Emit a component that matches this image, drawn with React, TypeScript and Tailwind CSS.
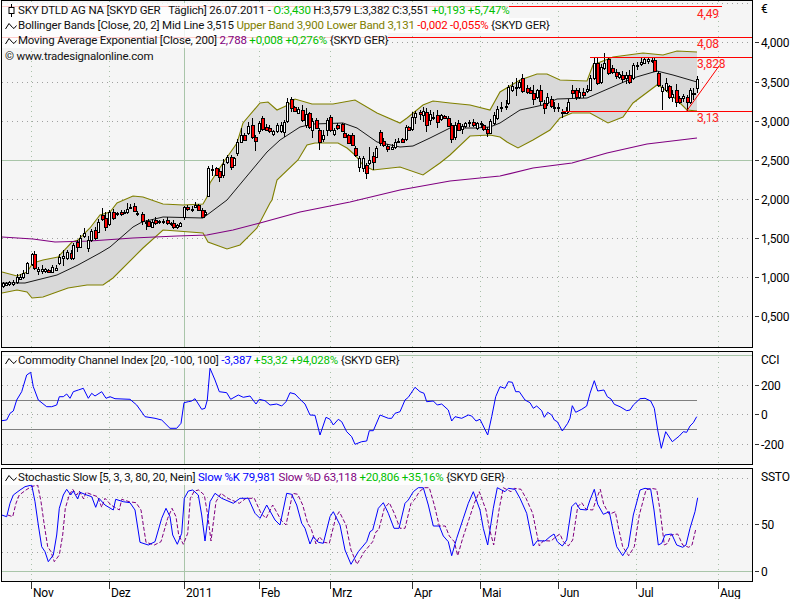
import React from 'react'

type Pt = [number, number]
// x, body top, body bottom, red?, high?, low?
type Candle = [number, number, number, number, number?, number?]

const MONTHS: [string, number][] = [
  ['Nov', 31], ['Dez', 109], ['2011', 184], ['Feb', 259], ['Mrz', 330],
  ['Apr', 412], ['Mai', 480], ['Jun', 558], ['Jul', 636], ['Aug', 718],
]

const UPPER: Pt[] = [[2,272],[17,276],[27,272],[33,263],[43,260],[58,257],[72,242],[78,240],[90,228],[100,215],[110,212],[117,203],[133,196],[143,197],[163,204],[183,205],[203,204],[207,197],[210,183],[223,163],[237,143],[243,123],[260,103],[268,102],[277,110],[288,105],[295,99],[312,104],[333,104],[355,100],[377,113],[400,123],[407,118],[423,105],[433,101],[450,103],[470,105],[490,110],[500,92],[510,86],[520,80],[537,74],[547,74],[560,80],[587,81],[593,65],[613,57],[643,53],[663,55],[677,51],[697,52]]
const LOWER: Pt[] = [[2,293],[17,290],[27,292],[32,298],[43,297],[68,288],[87,285],[103,285],[113,278],[143,248],[163,230],[177,231],[203,233],[208,242],[227,249],[240,245],[257,228],[270,203],[272,200],[277,180],[298,160],[307,145],[315,143],[338,143],[347,148],[355,155],[363,165],[373,170],[400,167],[423,175],[440,163],[450,155],[470,136],[490,135],[500,137],[507,142],[518,148],[533,140],[550,130],[560,118],[572,113],[590,113],[608,123],[623,117],[633,103],[657,85],[663,88],[677,100],[687,110],[697,111]]
const MID: Pt[] = [[2,283],[25,283],[57,275],[78,265],[100,253],[110,247],[133,227],[142,222],[163,217],[203,218],[227,200],[267,152],[280,140],[300,127],[313,124],[343,123],[357,128],[377,142],[400,147],[413,146],[430,138],[450,128],[475,128],[490,127],[500,123],[520,110],[543,105],[557,99],[587,98],[610,88],[633,78],[657,71],[673,75],[697,82]]
const EMA: Pt[] = [[2,237],[33,239],[55,242],[90,241],[133,238],[177,236],[207,235],[233,230],[260,223],[300,212],[350,202],[400,190],[450,181],[500,176],[533,168],[572,163],[607,153],[647,144],[697,138]]

const CANDLES: Candle[] = [
  [3,283,286,0],[6,283,285,0],[9,282,284,0],[13,282,284,0],[17,277,282,0],[20,277,279,0],[23,273,277,0],[27,263,273,0,262,274],
  [32,254,264,0,253,266],[34,254,268,1,251,270],[38,269,271,0,267,275],[42,269,271,0,265,274],[45,269,271,0],[48,270,272,1],[52,267,272,0],[56,268,270,0],
  [59,257,263,0,254,265],[63,256,258,0,250,266],[67,252,258,0],[71,253,258,1],[73,245,258,0],[77,242,247,1,240,252],[80,238,247,0],[84,233,236,0,228,238],
  [88,240,248,0,236,252],[91,231,240,0],[95,230,238,1],[98,222,232,0],[102,215,219,1,208,221],[105,218,227,1,212,231],[109,212,224,0],[113,212,218,1],
  [117,213,214,0],[121,212,214,1],[124,212,213,0],[127,209,212,0,203,214],[130,207,208,0,204,209],[134,206,211,1],[137,213,214,0,211,216],[142,214,221,1,212,225],
  [146,222,223,0,220,230],[148,221,226,1],[152,222,227,0],[155,220,223,1],[159,221,222,0],[163,221,222,0],[167,220,223,1],[171,223,224,0],[173,223,227,1],[177,225,227,0],
  [180,223,226,0],[184,207,217,0,206,220],[187,207,209,1],[192,209,210,0,206,212],[195,205,207,0,202,208],[198,205,210,1],[202,210,217,1],[205,212,214,0],
  [208,168,196,0],[212,169,170,0,165,176],[216,168,175,1],[219,171,177,1,169,182],[223,164,175,0,159,178],[227,157,162,0,155,164],[231,157,167,1,155,170],[234,158,165,0],
  [237,142,153,0,139,156],[241,135,142,0,128,143],[244,135,140,1],[248,126,133,0,122,135],[252,125,137,1,118,139],[255,137,141,1,135,151],[259,123,131,0,121,134],[262,118,129,1,116,131],
  [266,127,130,1],[269,128,131,1],[273,131,134,0],[277,125,131,0],[281,125,131,0],[284,122,132,0,120,137],[287,102,121,0,98,123],[291,99,108,1,97,112],
  [294,107,111,1],[298,109,113,0],[302,110,120,1,105,122],[306,114,125,0,108,128],[309,113,127,1],[312,121,130,0,118,138],[316,120,128,1],[319,130,142,1,128,150],
  [323,135,139,0,130,142],[327,120,130,0,118,136],[330,117,130,1,115,132],[334,130,134,0,128,136],[337,125,128,1],[342,124,131,1],[344,133,137,1],[348,135,143,1],
  [352,135,145,1],[355,148,155,1,146,157],[359,158,167,0,156,172],[363,158,168,0,156,172],[366,165,173,1,163,179],[369,160,163,0,147,165],[373,156,162,1,152,170],[376,148,157,0],
  [380,132,143,1,130,146],[383,141,145,1],[387,146,149,1,144,152],[392,147,149,0],[395,142,147,0],[398,141,142,0],[402,139,142,1],[406,127,139,0,125,141],
  [408,127,130,1],[412,117,129,0,112,131],[415,113,117,0,111,124],[420,112,114,1,110,120],[423,111,115,0,107,122],[426,112,125,1,108,132],[430,114,120,0,110,125],[433,117,118,0,112,120],
  [437,115,122,1,110,128],[441,115,119,0],[444,116,118,1],[448,118,126,1],[451,125,139,1,123,143],[455,125,137,0,122,140],[458,123,130,1],[462,126,129,0,124,134],
  [465,123,126,0],[469,122,123,0,120,127],[473,122,125,1],[477,123,128,0],[481,123,124,0,121,128],[483,125,129,1],[487,129,133,1,127,137],[490,121,133,0],
  [494,115,123,0,112,125],[497,109,118,0,106,120],[501,107,108,0,102,112],[506,106,107,0,100,110],[508,87,103,0,85,105],[512,86,90,0,82,92],[516,87,88,0,78,96],[519,82,87,0,80,89],
  [522,78,91,1,74,93],[527,88,92,1],[530,90,93,1],[533,93,99,1,85,105],[537,90,97,0],[540,90,101,1,85,105],[544,103,108,1,100,114],[547,97,103,0,93,106],
  [551,99,106,1],[554,107,108,0,102,112],[558,107,108,0,103,112],[562,112,113,1,109,118],[566,111,113,0,107,114],[568,102,111,0,99,113],[572,90,93,1,85,98],[576,90,97,1,88,100],
  [579,92,97,0,88,99],[583,92,95,1,88,98],[587,89,91,0,85,93],[590,78,90,0],[594,63,78,0,58,80],[597,63,83,1,58,85],[601,67,82,0,64,84],[604,63,68,0,53,70],
  [608,59,73,1,57,75],[612,68,72,1,65,74],[616,72,76,1,69,79],[619,74,77,0],[622,75,79,1,71,83],[626,75,78,0,72,84],[629,75,82,1,70,84],[633,65,78,0,63,80],
  [637,65,66,0,62,70],[641,62,64,0,58,66],[644,59,63,0,58,64],[648,59,61,0,57,64],[652,60,61,0,58,63],[654,60,71,1,58,72],[658,73,85,1,71,87],[662,87,91,0,85,110],
  [666,83,90,0,78,92],[669,86,97,1],[672,94,97,0,90,102],[676,90,102,1,84,107],[679,98,102,1,96,104],[683,96,98,0,94,102],[687,97,102,1,95,112],[690,90,102,0,88,104],
  [693,93,94,1,88,100],[697,79,88,0,76,93],
]

const CCI_A: Pt[] = [[5,242],[20,240],[30,220],[40,213],[50,180],[65,155],[80,105],[92,97],[100,140],[115,180],[140,200],[155,200],[170,195],[178,170],[190,170],[200,162],[210,175],[220,155],[235,150],[250,145],[265,175],[275,160],[285,168],[305,155],[318,175],[330,170],[345,176],[390,178],[410,195],[435,230],[465,235],[485,240],[510,265],[530,265],[543,250],[552,188],[565,185],[575,183],[585,176],[605,208],[615,205],[622,180],[630,85],[645,120],[658,155],[680,158],[692,178],[715,165],[730,172],[750,168],[768,192],[778,178],[795,182],[810,195],[830,192],[845,198],[858,185],[870,158],[885,162],[900,178],[915,192],[930,225],[945,226],[960,285],[978,232],[990,238],[1000,255],[1015,238],[1025,245],[1040,275],[1055,290],[1065,313],[1085,305],[1100,303],[1108,272],[1120,272],[1140,225],[1165,235],[1175,235],[1185,220],[1200,215]]
const CCI_B: Pt[] = [[15,180],[25,172],[45,142],[60,155],[72,160],[80,185],[100,183],[112,195],[125,192],[145,210],[155,243],[165,230],[185,235],[205,225],[215,228],[228,243],[240,238],[263,285],[275,230],[287,170],[300,140],[315,145],[325,125],[337,127],[347,155],[358,155],[375,180],[390,188],[400,205],[410,198],[425,212],[433,232],[443,217],[455,225],[463,240],[472,245],[487,273],[503,250],[510,235],[517,197],[527,217],[545,208],[560,198],[570,160],[583,122],[593,153],[612,150],[622,170],[633,177],[643,193],[660,200],[680,212],[690,210],[700,195],[720,176],[735,175],[752,183],[763,205],[773,270],[784,325],[797,275],[817,305],[838,288],[850,275],[860,277],[870,258],[880,248],[890,230]]
const SSTO_A: Pt[] = [[5,150],[20,155],[30,115],[40,90],[60,75],[75,65],[95,60],[105,110],[115,180],[125,245],[135,260],[145,290],[160,270],[170,210],[178,130],[190,90],[200,73],[212,90],[220,78],[233,102],[240,82],[260,90],[275,95],[287,127],[297,100],[315,120],[340,135],[347,103],[370,110],[390,113],[405,135],[420,232],[445,240],[465,230],[485,160],[498,130],[510,155],[518,210],[532,238],[545,205],[553,100],[565,78],[578,75],[595,90],[605,150],[615,228],[630,110],[645,85],[665,100],[700,115],[720,100],[745,100],[765,145],[780,160],[800,120],[825,165],[840,180],[860,85],[875,88],[890,120],[905,175],[915,190],[930,237],[940,215],[955,232],[970,235],[990,155],[1000,140],[1020,180],[1035,255],[1053,298],[1075,260],[1100,230],[1110,200],[1118,195],[1135,130],[1150,113],[1165,145],[1182,190],[1197,190]]
const SSTO_B: Pt[] = [[15,115],[25,105],[40,80],[55,68],[70,68],[85,120],[100,183],[118,183],[130,213],[145,230],[155,272],[170,220],[190,160],[205,115],[220,80],[240,135],[250,190],[263,240],[280,130],[292,68],[305,75],[315,80],[325,70],[345,73],[360,100],[380,145],[390,195],[400,243],[412,227],[435,228],[450,215],[462,207],[472,230],[487,243],[500,225],[515,125],[527,113],[540,133],[560,135],[570,105],[583,73],[593,118],[610,148],[628,140],[640,200],[650,245],[668,272],[685,245],[700,150],[720,75],[735,70],[752,73],[762,135],[775,240],[785,235],[795,210],[815,207],[830,240],[848,247],[858,240],[870,190],[885,140],[893,98]]

// zoom-crop readings -> page pixels
const fromZoom = (pts: Pt[], dx: number, dy: number): Pt[] => pts.map(([x, y]) => [dx + x / 3, dy + y / 3])
const CCI = [...fromZoom(CCI_A, 0, 340), ...fromZoom(CCI_B, 400, 340)]
const KLINE = [...fromZoom(SSTO_A, 0, 465), ...fromZoom(SSTO_B, 400, 465)]
const DLINE: Pt[] = KLINE.map(([x, y]) => [x + 6, y] as Pt).filter(([x]) => x <= 697)

const toPts = (pts: Pt[]) => pts.map(([x, y]) => `${x.toFixed(1)},${y.toFixed(1)}`).join(' ')

const FONT = 'Roboto, sans-serif'
const DOT = '#a0a0a0'
const VDOT = '#a9c0a9'
const GREEN = '#a9c5a9'

function VGrid({ y1, y2 }: { y1: number; y2: number }) {
  return (
    <g shapeRendering="crispEdges">
      {MONTHS.map(([name, x]) =>
        name === '2011' ? (
          <line key={name} x1={x + 0.5} x2={x + 0.5} y1={y1} y2={y2} stroke={GREEN} />
        ) : (
          <line key={name} x1={x + 0.5} x2={x + 0.5} y1={y1} y2={y2} stroke={VDOT} strokeDasharray="1 4" />
        )
      )}
    </g>
  )
}

function HDots({ ys, x2 = 752 }: { ys: number[]; x2?: number }) {
  return (
    <g shapeRendering="crispEdges">
      {ys.map((y) => (
        <line key={y} x1={2} x2={x2} y1={y + 0.5} y2={y + 0.5} stroke={DOT} strokeDasharray="1 4" />
      ))}
    </g>
  )
}

function CandleBar({ c }: { c: Candle }) {
  const [x, top, bottom, red, high, low] = c
  const px = Math.round(x) + 0.5
  const hi = high ?? top - 1 - (Math.round(x) % 3)
  const lo = low ?? bottom + 1 + (Math.round(x) % 2)
  const w = red ? 3 : 2
  return (
    <g shapeRendering="crispEdges">
      <line x1={px} x2={px} y1={hi} y2={lo} stroke="#000" />
      <rect x={px - 1} y={top + 0.5} width={w} height={Math.max(bottom - top, 1)} fill={red ? '#ff0000' : '#fff'} stroke="#000" />
    </g>
  )
}

function AxisTicks({ ticks, top, height, unit }: { ticks: [string, number][]; top: number; height: number; unit: string }) {
  return (
    <svg className="shrink-0" width={47} height={height} viewBox={`753 ${top} 47 ${height}`}>
      <text x={761} y={top + 13} fontSize={12} fill="#000" fontFamily={FONT}>{unit}</text>
      {ticks.map(([label, y]) => (
        <g key={label}>
          <line x1={755} x2={759} y1={y + 0.5} y2={y + 0.5} stroke="#333" />
          <text x={761} y={y + 4.5} fontSize={12} fill="#000" fontFamily={FONT}>{label}</text>
        </g>
      ))}
    </svg>
  )
}

function WaveIcon() {
  return (
    <svg width={12} height={8} viewBox="0 0 12 8" className="shrink-0">
      <path d="M0.5 7 L4 1.5 L7.5 5.5 L9 6.5 L11.5 3.5" fill="none" stroke="#000" />
    </svg>
  )
}

function CandleIcon() {
  return (
    <svg width={12} height={13} viewBox="0 0 12 13" className="shrink-0">
      <path d="M6.5 0V13" stroke="#000" />
      <rect x={4} y={3.5} width={5} height={6} fill="#fff" stroke="#000" />
    </svg>
  )
}

const labelRow = 'flex items-center gap-[1px] h-[15px] w-fit bg-white/80 pl-[3px] whitespace-nowrap text-[#111]'

export default function App() {
  return (
    <div className="w-[800px] h-[600px] bg-white overflow-hidden pl-[1px] flex flex-col gap-[3px] text-[11.5px] tracking-[-0.2px] leading-[15px] font-['Roboto',sans-serif]">
      {/* Price panel */}
      <div className="flex h-[348px]">
        <div className="relative w-[752px] h-full border border-black bg-[#f5f5f5] shrink-0">
          <svg width={750} height={346} viewBox="2 1 750 346" className="block">
            <VGrid y1={1} y2={347} />
            <HDots ys={[3, 42, 82, 121, 199, 238, 277, 316]} />
            <line x1={2} x2={752} y1={160.5} y2={160.5} stroke={GREEN} />
            <polygon points={toPts([...UPPER, ...[...LOWER].reverse()])} fill="#d9d9d9" />
            <polyline points={toPts(UPPER)} fill="none" stroke="#808000" strokeWidth={1.1} />
            <polyline points={toPts(LOWER)} fill="none" stroke="#808000" strokeWidth={1.1} />
            <polyline points={toPts(EMA)} fill="none" stroke="#800080" strokeWidth={1.1} />
            <polyline points={toPts(MID)} fill="none" stroke="#000" strokeWidth={0.9} />
            {CANDLES.map((c) => <CandleBar key={c[0]} c={c} />)}
            <g stroke="#ff0000" shapeRendering="crispEdges">
              <line x1={2} x2={722} y1={6.5} y2={6.5} />
              <line x1={2} x2={752} y1={37.5} y2={37.5} />
              <line x1={590} x2={752} y1={57.5} y2={57.5} />
              <line x1={562} x2={752} y1={111.5} y2={111.5} />
            </g>
            <line x1={686} x2={719} y1={112} y2={66} stroke="#ff0000" />
            <g fill="#ff2020" fontSize={12} fontFamily={FONT}>
              <text x={697} y={18}>4,49</text>
              <text x={697} y={48}>4,08</text>
              <text x={697} y={68}>3,828</text>
              <text x={697} y={122}>3,13</text>
            </g>
          </svg>
          <div className="absolute top-[2px] left-0">
            <div className={labelRow}>
              <CandleIcon />
              <span>SKY DTLD AG NA [SKYD GER&nbsp;&nbsp; Täglich] 26.07.2011 - <span className="text-[#00c000]">O:3,430</span> H:3,579 L:3,382 C:3,551 <span className="text-[#00c000]">+0,193 +5,747%</span></span>
            </div>
            <div className={labelRow}>
              <WaveIcon />
              <span>Bollinger Bands [Close, 20, 2] Mid Line 3,515 <span className="text-[#808000]">Upper Band 3,900 Lower Band 3,131</span> <span className="text-[#ff0000]">-0,002 -0,055%</span> {'{SKYD GER}'}</span>
            </div>
            <div className={labelRow}>
              <WaveIcon />
              <span>Moving Average Exponential [Close, 200] <span className="text-[#800080]">2,788</span> <span className="text-[#00c000]">+0,008 +0,276%</span> {'{SKYD GER}'}</span>
            </div>
            <div className="h-[16px] mt-[1px] pl-[3px] text-[#111] whitespace-nowrap">© www.tradesignalonline.com</div>
          </div>
        </div>
        <AxisTicks
          top={0}
          height={348}
          unit="€"
          ticks={[['4,000', 42], ['3,500', 82], ['3,000', 121], ['2,500', 160], ['2,000', 199], ['1,500', 238], ['1,000', 277], ['0,500', 316]]}
        />
      </div>

      {/* CCI panel */}
      <div className="flex h-[114px]">
        <div className="relative w-[752px] h-full border border-black bg-[#f5f5f5] shrink-0">
          <svg width={750} height={112} viewBox="2 352 750 112" className="block">
            <VGrid y1={352} y2={464} />
            <line x1={2} x2={752} y1={355.5} y2={355.5} stroke={GREEN} />
            <HDots ys={[385, 414, 444]} />
            <line x1={2} x2={697} y1={400.5} y2={400.5} stroke="#808080" />
            <line x1={2} x2={697} y1={429.5} y2={429.5} stroke="#808080" />
            <polyline points={toPts(CCI)} fill="none" stroke="#0000ff" strokeWidth={1} />
          </svg>
          <div className="absolute top-[1px] left-0">
            <div className={labelRow}>
              <WaveIcon />
              <span>Commodity Channel Index [20, -100, 100] <span className="text-[#0000ff]">-3,387</span> <span className="text-[#00c000]">+53,32 +94,028%</span> {'{SKYD GER}'}</span>
            </div>
          </div>
        </div>
        <AxisTicks top={351} height={114} unit="CCI" ticks={[['200', 385], ['0', 414], ['-200', 444]]} />
      </div>

      {/* Stochastic panel */}
      <div className="flex h-[114px]">
        <div className="relative w-[752px] h-full border border-black bg-[#f5f5f5] shrink-0">
          <svg width={750} height={112} viewBox="2 469 750 112" className="block">
            <VGrid y1={469} y2={581} />
            <HDots ys={[478, 524]} />
            <HDots ys={[497, 552]} x2={697} />
            <line x1={2} x2={752} y1={571.5} y2={571.5} stroke={GREEN} />
            <polyline points={toPts(DLINE)} fill="none" stroke="#800080" strokeWidth={1} strokeDasharray="4 2" />
            <polyline points={toPts(KLINE)} fill="none" stroke="#0000ff" strokeWidth={1} />
          </svg>
          <div className="absolute top-[1px] left-0">
            <div className={labelRow}>
              <WaveIcon />
              <span>Stochastic Slow [5, 3, 3, 80, 20, Nein] <span className="text-[#0000ff]">Slow %K 79,981</span> <span className="text-[#800080]">Slow %D 63,118</span> <span className="text-[#00c000]">+20,806 +35,16%</span> {'{SKYD GER}'}</span>
            </div>
          </div>
        </div>
        <AxisTicks top={468} height={114} unit="SSTO" ticks={[['50', 524], ['0', 571]]} />
      </div>

      {/* Time axis */}
      <svg width={752} height={17} viewBox="1 582 752 17" className="block -mt-[3px] shrink-0">
        {MONTHS.map(([name, x]) => (
          <g key={name}>
            <line x1={x + 0.5} x2={x + 0.5} y1={582} y2={589} stroke="#333" />
            <text x={x + 2} y={597} fontSize={12} fill="#000" fontFamily={FONT}>{name}</text>
          </g>
        ))}
      </svg>
    </div>
  )
}
